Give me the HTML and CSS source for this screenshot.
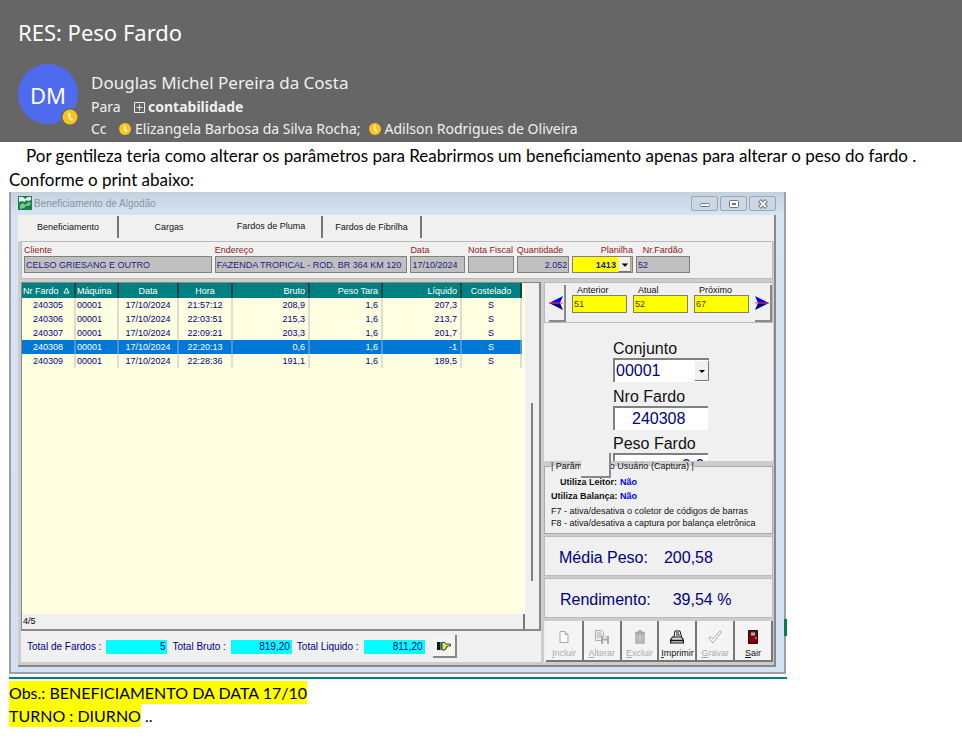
FILE: index.html
```html
<!DOCTYPE html>
<html lang="pt-BR">
<head>
<meta charset="utf-8">
<meta name="viewport" content="width=device-width, initial-scale=1">
<title>RES: Peso Fardo</title>
<link rel="stylesheet" href="styles.css">
</head>
<body>
<header class="mail-head">
  <h1>RES: Peso Fardo</h1>
  <div class="sender">
    <div class="avatar">DM
      <svg class="presence" viewBox="0 0 18 18" aria-hidden="true"><circle cx="9" cy="9" r="9" fill="#666"/><circle cx="9" cy="9" r="7.5" fill="#fcc419"/><path d="M8.4 5v4.6l3 2.8" fill="none" stroke="#fff" stroke-width="1.8"/></svg>
    </div>
    <div class="people">
      <div class="from">Douglas Michel Pereira da Costa</div>
      <div class="line"><span class="tag">Para</span>
        <svg class="plus" viewBox="0 0 11 11" aria-hidden="true"><path d="M.5.5h10v10H.5zM2.5 5.5h6M5.5 2.5v6" fill="none" stroke="#f0f0f0"/></svg><b>contabilidade</b></div>
      <div class="line"><span class="tag tag-cc">Cc</span>
        <svg class="clock" viewBox="0 0 12 12" aria-hidden="true"><circle cx="6" cy="6" r="6" fill="#fcc419"/><path d="M5.6 2.6v3.8l2.4 2.2" fill="none" stroke="#fff" stroke-width="1.5"/></svg><span>Elizangela Barbosa da Silva Rocha;</span>
        <svg class="clock clock-next" viewBox="0 0 12 12" aria-hidden="true"><circle cx="6" cy="6" r="6" fill="#fcc419"/><path d="M5.6 2.6v3.8l2.4 2.2" fill="none" stroke="#fff" stroke-width="1.5"/></svg><span>Adilson Rodrigues de Oliveira</span></div>
    </div>
  </div>
</header>

<main class="message">
  <p class="intro">Por gentileza teria como alterar os parâmetros para Reabrirmos um beneficiamento apenas para alterar o peso do fardo .</p>
  <p>Conforme o print abaixo:</p>

  <section class="shot">
    <div class="window">
      <div class="titlebar">
        <svg class="app-icon" viewBox="0 0 14 14" aria-hidden="true"><path fill="#17804f" d="M0 0h14v14H0z"/><path fill="#e6f3ea" d="M1 1h4l2 2 3-2h3v3l-3 1-2-1-1 2-3-1-3 1z"/><path fill="#7cc78f" d="M2 9l3-2 2 2 4-3 2 1-2 3-3 0-2 2-4 1z"/></svg>
        <span class="caption">Beneficiamento de Algodão</span>
        <button class="win-btn" aria-label="Minimizar"><svg viewBox="0 0 12 10"><rect x="1.500" y="4.500" width="9" height="3" rx="1" fill="#fff" stroke="#6d7580"/></svg></button>
        <button class="win-btn" aria-label="Maximizar"><svg viewBox="0 0 12 10"><rect x="1.500" y="1.500" width="9" height="7" rx="1" fill="#fff" stroke="#6d7580"/><path d="M4 5h4" stroke="#6d7580" stroke-width="2"/></svg></button>
        <button class="win-btn" aria-label="Fechar"><svg viewBox="0 0 12 10"><path d="M2.500 1.500l7 7M9.500 1.500l-7 7" stroke="#6d7580" stroke-width="4"/><path d="M3 2l6 6M9 2l-6 6" stroke="#fff" stroke-width="1.800"/></svg></button>
      </div>
      <div class="client">
        <nav class="tabs">
          <button class="tab tab-first">Beneficiamento</button>
          <button class="tab">Cargas</button>
          <button class="tab tab-active">Fardos de Pluma</button>
          <button class="tab tab-last">Fardos de Fibrilha</button>
        </nav>

        <div class="panels">
          <form class="record">
            <label>Cliente<input value="CELSO GRIESANG E OUTRO" readonly></label>
            <label>Endereço<input value="FAZENDA TROPICAL - ROD. BR 364 KM 120" readonly></label>
            <label>Data<input value="17/10/2024" readonly></label>
            <label>Nota Fiscal<input value="" readonly></label>
            <label>Quantidade<input class="num" value="2.052" readonly></label>
            <label class="end">Planilha<span class="combo combo-yellow"><select><option>1413</option></select><svg viewBox="0 0 12 14" aria-hidden="true"><path d="M0 0h12v14H0z" fill="#eee"/><path d="M11.500 0v13.500H0" fill="none" stroke="#777"/><path d="M3 6h6L6 9z"/></svg></span></label>
            <label class="center">Nr.Fardão<input value="52" readonly></label>
          </form>

          <div class="columns">
            <div class="left">
              <div class="grid-box">
                <div class="grid-main">
                  <table>
                    <colgroup><col class="c1"><col class="c2"><col class="c3"><col class="c4"><col class="c5"><col class="c6"><col class="c7"><col class="c8"></colgroup>
                    <thead><tr><th class="l">Nr Fardo <svg class="sort" viewBox="0 0 7 7" aria-hidden="true"><path d="M1 6l2.500-5L6 6z" fill="none" stroke="#fff"/></svg></th><th class="l">Máquina</th><th>Data</th><th>Hora</th><th class="r">Bruto</th><th class="r">Peso Tara</th><th class="r">Líquido</th><th>Costelado</th></tr></thead>
                    <tbody>
                      <tr><td>240305</td><td class="l">00001</td><td>17/10/2024</td><td>21:57:12</td><td class="r">208,9</td><td class="r">1,6</td><td class="r">207,3</td><td>S</td></tr>
                      <tr><td>240306</td><td class="l">00001</td><td>17/10/2024</td><td>22:03:51</td><td class="r">215,3</td><td class="r">1,6</td><td class="r">213,7</td><td>S</td></tr>
                      <tr><td>240307</td><td class="l">00001</td><td>17/10/2024</td><td>22:09:21</td><td class="r">203,3</td><td class="r">1,6</td><td class="r">201,7</td><td>S</td></tr>
                      <tr class="selected"><td>240308</td><td class="l">00001</td><td>17/10/2024</td><td>22:20:13</td><td class="r">0,6</td><td class="r">1,6</td><td class="r">-1</td><td>S</td></tr>
                      <tr><td>240309</td><td class="l">00001</td><td>17/10/2024</td><td>22:28:36</td><td class="r">191,1</td><td class="r">1,6</td><td class="r">189,5</td><td>S</td></tr>
                    </tbody>
                  </table>
                  <div class="counter">4/5</div>
                </div>
                <div class="scroll"><div class="thumb"></div></div>
              </div>
              <div class="totals">
                <span>Total de Fardos :</span><output>5</output>
                <span>Total Bruto :</span><output>819,20</output>
                <span>Total Liquido :</span><output>811,20</output>
                <button class="hand" aria-label="Recalcular"><svg viewBox="0 0 14 10"><path d="M0 1h3v8H0z" fill="#111"/><path d="M3 1h2v8H3z" fill="#18a0a0"/><path d="M5 1.500h3L9 3h4.500v2H10v1.500H9V8H8v1H5z" fill="#f0e060" stroke="#222" stroke-width=".8"/></svg></button>
              </div>
            </div>

            <aside class="right">
              <div class="nav-box">
                <button class="arrow" aria-label="Fardão anterior"><svg viewBox="0 0 14 14"><path d="M14 0L0 7h14L11 7z" fill="#00f"/><path d="M0 7h11l3 7z" fill="#000080"/><path d="M0 7h14" stroke="#f44"/></svg></button>
                <label>Anterior<input value="51" readonly></label>
                <label>Atual<input value="52" readonly></label>
                <label>Próximo<input value="67" readonly></label>
                <button class="arrow" aria-label="Próximo fardão"><svg viewBox="0 0 14 14"><path d="M0 0l14 7H3z" fill="#00f"/><path d="M14 7H3l-3 7z" fill="#000080"/><path d="M0 7h14" stroke="#f44"/></svg></button>
              </div>

              <form class="bale">
                <label>Conjunto<span class="combo combo-big"><select><option>00001</option></select><svg viewBox="0 0 14 20" aria-hidden="true"><path d="M0 0h14v20H0z" fill="#f0f0f0"/><path d="M13.500 0v19.500H0" fill="none" stroke="#777"/><path d="M4 9h6l-3 3z"/></svg></span></label>
                <label>Nro Fardo<input value="240308" readonly></label>
                <label class="cut">Peso Fardo<input value="0,6" readonly></label>
              </form>

              <fieldset class="params">
                <legend>| Parâmetros do Usuário (Captura) |</legend>
                <button class="blank" aria-label="Captura"></button>
                <p class="flag"><span>Utiliza Leitor:</span> <em>Não</em></p>
                <p class="flag"><span>Utiliza Balança:</span> <em>Não</em></p>
                <div class="hints">
                  <p>F7 - ativa/desativa o coletor de códigos de barras</p>
                  <p>F8 - ativa/desativa a captura por balança eletrônica</p>
                </div>
              </fieldset>

              <div class="metric"><span>Média Peso:</span><output>200,58</output></div>
              <div class="metric metric-yield"><span>Rendimento:</span><output>39,54 %</output></div>

              <div class="toolbar">
                <button disabled><svg viewBox="0 0 14 14"><path d="M3 1.500h5l3 3v8H3zM8 1.500v3h3" fill="#fafafa" stroke="#aaa"/></svg><span><u>I</u>ncluir</span></button>
                <button disabled><svg viewBox="0 0 14 14"><path d="M.5.5h6l2 2v8h-8zM2 3h4M2 5h5M2 7h4" fill="#eee" stroke="#aaa"/><path d="M6 6h8v8H6z" fill="#aaa"/><path d="M8 6.500h4v2H8zM8 10.500h4V14H8z" fill="#eee"/></svg><span><u>A</u>lterar</span></button>
                <button disabled><svg viewBox="0 0 14 14"><path d="M2 2.500h10M5 1h4M3 4h8v9H3z" stroke="#aaa" stroke-width="1.500" fill="#ccc"/><path d="M5.500 5v7M8.500 5v7" stroke="#aaa"/></svg><span><u>E</u>xcluir</span></button>
                <button><svg viewBox="0 0 14 14"><path d="M4 7L5 1h5l1.500 6" fill="#fff" stroke="#111"/><path d="M6 3h3M6 5h4" stroke="#111"/><path d="M2.500 7h9l2 3v3H.5v-3z" fill="#ddd" stroke="#111" stroke-width="1.200"/><path d="M1 10.500h12" stroke="#111" stroke-width="1.500"/></svg><span><u>I</u>mprimir</span></button>
                <button disabled><svg viewBox="0 0 14 14"><path d="M.8 8l2-1.500 2 2.500L12 1l1.500 1L5 13z" fill="#fafafa" stroke="#aaa"/></svg><span><u>G</u>ravar</span></button>
                <button><svg viewBox="0 0 14 14"><path d="M2.500.5h9v13h-9z" fill="#8b0000" stroke="#300"/><path d="M5 2.500h4v3H5z" fill="#50d8e8"/><path d="M9 8h1.500" stroke="#fff"/></svg><span><u>S</u>air</span></button>
              </div>
            </aside>
          </div>
        </div>
      </div>
    </div>
    <div class="desktop-edge"></div>
  </section>

  <p class="note"><mark>Obs.: BENEFICIAMENTO DA DATA 17/10</mark></p>
  <p class="note"><mark>TURNO : DIURNO</mark> ..</p>
</main>
</body>
</html>
```
FILE: styles.css
```css
* { box-sizing: border-box; }

body {
  margin: 0;
  background: #fff;
  color: #000;
  font-family: Lato, "Liberation Sans", sans-serif;
}

p { margin: 0; }
button, input, select { font: inherit; color: inherit; margin: 0; }
svg { display: block; }

/* Message header */
.mail-head {
  background: #666;
  color: #f0f0f0;
  padding: 16px 18px 2px;
  font-family: "Noto Sans", "Open Sans", sans-serif;
}
.mail-head h1 {
  margin: 0 0 16px;
  font-size: 22px;
  line-height: 32px;
  font-weight: 400;
  color: #fff;
}
.sender { display: flex; gap: 13px; }
.avatar {
  position: relative;
  width: 60px;
  height: 60px;
  border-radius: 50%;
  background: #4f6bed;
  color: #fff;
  font-size: 22px;
  line-height: 62px;
  text-align: center;
}
.presence { position: absolute; right: -1px; bottom: -2px; width: 18px; height: 18px; }
.people { padding-top: 6px; }
.from { font-size: 17px; line-height: 26px; }
.line { display: flex; align-items: center; font-size: 14px; line-height: 22px; }
.tag { width: 43px; }
.tag-cc { width: 28px; }
.plus { width: 11px; height: 11px; margin-right: 3px; }
.clock { width: 12px; height: 12px; margin-right: 4px; }
.clock-next { margin-left: 8px; }

/* Message body */
.message { padding: 2px 9px 16px; font-size: 17px; line-height: 24px; }
.intro { padding-left: 17px; }
.note { font-size: 16px; line-height: 23px; }
mark { background: #ff0; color: #000; padding: 2px 0; }

/* Embedded program window */
.shot {
  position: relative;
  max-width: 778px;
  margin-bottom: 2px;
  padding-bottom: 3px;
  border-bottom: 2px solid #008080;
  color: #000080;
  font-family: "Liberation Sans", sans-serif;
  font-size: 9px;
  line-height: 10px;
}
.desktop-edge {
  position: absolute;
  right: 0;
  bottom: 41px;
  width: 3px;
  height: 17px;
  background: #0a8040;
}
.window {
  margin-right: 1px;
  padding: 0 8px 5px 7px;
  border: solid #9aa0a6;
  border-width: 0 2px 2px;
  background: linear-gradient(#c3d1df, #d6e3f1 22px, #d3e1f1);
}
.titlebar { display: flex; align-items: flex-start; height: 23px; gap: 2px; padding: 4px 0 0; }
.app-icon { width: 14px; height: 14px; }
.caption { flex: 1; color: #8c949e; font-size: 10px; line-height: 16px; }
.win-btn {
  width: 27px;
  height: 15px;
  padding: 0;
  border: 1px solid #9aa8b8;
  border-radius: 2px;
  background: #cbd7e4;
}
.win-btn svg { width: 12px; height: 10px; margin: auto; }
.client { background: #f0f0f0; border: solid #888; border-width: 0 2px 2px 0; }

.tabs { display: flex; height: 26px; padding: 1px 0 0 1px; }
.tab {
  height: 22px;
  width: 102px;
  padding: 0;
  border: 0;
  border-right: 2px solid #777;
  background: #f0f0f0;
  color: #111;
}
.tab:nth-child(2) { border-right-color: #f0f0f0; }
.tab-first { width: 100px; }
.tab-active { padding-bottom: 3px; }
.tab-last { width: 99px; }

.panels { padding: 0 1px 3px 3px; background: #ccc; }

.record {
  display: grid;
  grid-template-columns: 189fr 194fr 55fr 46fr 53fr 61fr 54fr 78fr;
  gap: 3px;
  height: 38px;
  padding: 3px 2px;
  border: 1px solid #bbb;
  background: #f0f0f0;
  color: #902020;
}
.record label, .nav-box label { white-space: nowrap; }
.record input, .record select {
  display: block;
  width: 100%;
  height: 17px;
  margin-top: 1px;
  padding: 0 1px;
  border: 1px solid #808080;
  border-radius: 0;
  background: #c0c0c0;
  color: #202080;
}
.record .num { text-align: right; }
.record .end { text-align: right; }
.record .center { text-align: center; }
.combo { position: relative; display: block; }
.combo select { appearance: none; }
.combo svg { position: absolute; pointer-events: none; }
.record .combo-yellow select {
  padding-right: 16px;
  background: #ff0;
  font-weight: 700;
  text-align-last: right;
}
.combo-yellow svg { right: 1px; top: 1px; width: 14px; height: 15px; }

.columns { display: flex; gap: 3px; padding-top: 3px; }
.left { flex: 1; min-width: 0; display: flex; flex-direction: column; }
.right { width: 229px; display: flex; flex-direction: column; }

/* Bale list */
.grid-box {
  flex: 1;
  display: flex;
  border: solid #888;
  border-width: 1px 2px 2px 1px;
  background: #f0f0f0;
}
.grid-main { flex: 1; display: flex; flex-direction: column; background: #ffffe1; }
table { width: calc(100% - 3px); table-layout: fixed; border-collapse: collapse; }
.c1 { width: 53px; }
.c2 { width: 43px; }
.c3 { width: 60px; }
.c4 { width: 54px; }
.c5 { width: 77px; }
.c6 { width: 73px; }
.c7 { width: 79px; }
th, td {
  height: 14px;
  padding: 0 3px;
  border-right: 2px solid #ddddd0;
  line-height: 12px;
  text-align: center;
  white-space: nowrap;
}
th { height: 15px; background: #008080; color: #fff; font-weight: 400; border-right-color: #004848; }
th .sort { display: inline-block; width: 7px; height: 7px; margin-left: 2px; }
.l { text-align: left; padding: 0 1px; }
.r { text-align: right; }
.selected { background: #0078d7; color: #fff; }
.selected td { border-right-color: #4b96cc; }
.counter {
  height: 15px;
  margin-top: auto;
  padding: 2px 1px;
  border-right: 2px solid #777;
  background: #f0f0f0;
  color: #000;
}
.scroll { width: 14px; padding: 120px 6px 48px; display: flex; }
.thumb { width: 2px; background: #808080; }

.totals {
  display: flex;
  align-items: center;
  height: 31px;
  padding-left: 6px;
  background: #f0f0f0;
  font-size: 10px;
}
.totals output {
  width: 61px;
  height: 14px;
  margin: 0 5px;
  padding-right: 2px;
  background: #0ff;
  line-height: 14px;
  text-align: right;
}
.hand {
  width: 24px;
  height: 23px;
  margin-left: 3px;
  padding: 0;
  border: solid #888;
  border-width: 0 2px 2px 0;
  background: #f4f4f4;
}
.hand svg { width: 14px; height: 10px; margin: auto; }

/* Navigation between records */
.nav-box {
  display: flex;
  justify-content: space-between;
  height: 41px;
  padding: 2px 0 0 4px;
  border: 1px solid #bbb;
  background: #f0f0f0;
  color: #111;
}
.nav-box label { width: 55px; text-indent: 5px; }
.nav-box input {
  display: block;
  width: 55px;
  height: 18px;
  padding: 0 1px;
  border: 1px solid #808060;
  background: #ff0;
  color: #404020;
}
.arrow {
  width: 17px;
  padding: 0;
  border: solid #888;
  border-width: 0 2px 2px 0;
  background: #f0f0f0;
}
.arrow svg { width: 14px; height: 14px; }

.bale {
  height: 138px;
  overflow: hidden;
  padding: 17px 0 0 69px;
  background: #f0f0f0;
  color: #111;
  font-size: 16px;
}
.bale label { display: block; height: 48px; line-height: 18px; }
.bale .cut { margin-top: -1px; }
.bale input, .bale select {
  display: block;
  width: 95px;
  height: 24px;
  padding: 0 2px;
  border: solid #808080;
  border-width: 2px 0 0 2px;
  border-radius: 0;
  background: #fff;
  color: #000080;
}
.bale input { padding: 0 17px; }
.combo-big { width: 96px; }
.bale .combo-big select { width: 96px; padding: 0 1px; }
.combo-big svg { right: 0; top: 2px; width: 14px; height: 22px; }
.bale .cut input { text-align: right; padding: 0 4px; }

.params {
  position: relative;
  min-width: 0;
  margin: 0;
  padding: 4px 6px;
  border: 1px solid #aaa;
  background: #f0f0f0;
  color: #111;
}
.params legend { padding: 0; }
.blank {
  position: absolute;
  left: 36px;
  top: -18px;
  width: 30px;
  height: 25px;
  border: solid #888;
  border-width: 0 2px 2px 0;
  background: #f0f0f0;
}
.flag { display: flex; gap: 3px; line-height: 14px; font-weight: 700; }
.flag span { width: 66px; text-align: right; white-space: nowrap; }
.flag em { color: #00f; font-style: normal; }
.hints { padding-top: 2px; line-height: 12px; white-space: nowrap; }

.metric {
  display: flex;
  gap: 16px;
  height: 40px;
  margin-top: 2px;
  padding-left: 14px;
  border: 1px solid #bbb;
  background: #f0f0f0;
  font-size: 16px;
  line-height: 42px;
}
.metric-yield { gap: 22px; padding-left: 15px; }

.toolbar { display: flex; margin-top: 3px; padding-left: 2px; background: #f0f0f0; }
.toolbar button {
  flex: 1;
  height: 41px;
  padding: 6px 0 0;
  border: solid #777;
  border-width: 0 2px 2px 0;
  background: #f4f4f4;
  color: #111;
}
.toolbar button:disabled { color: #aaa; }
.toolbar svg { width: 14px; height: 14px; margin: 0 auto 4px; }
.toolbar span { display: block; }
```
